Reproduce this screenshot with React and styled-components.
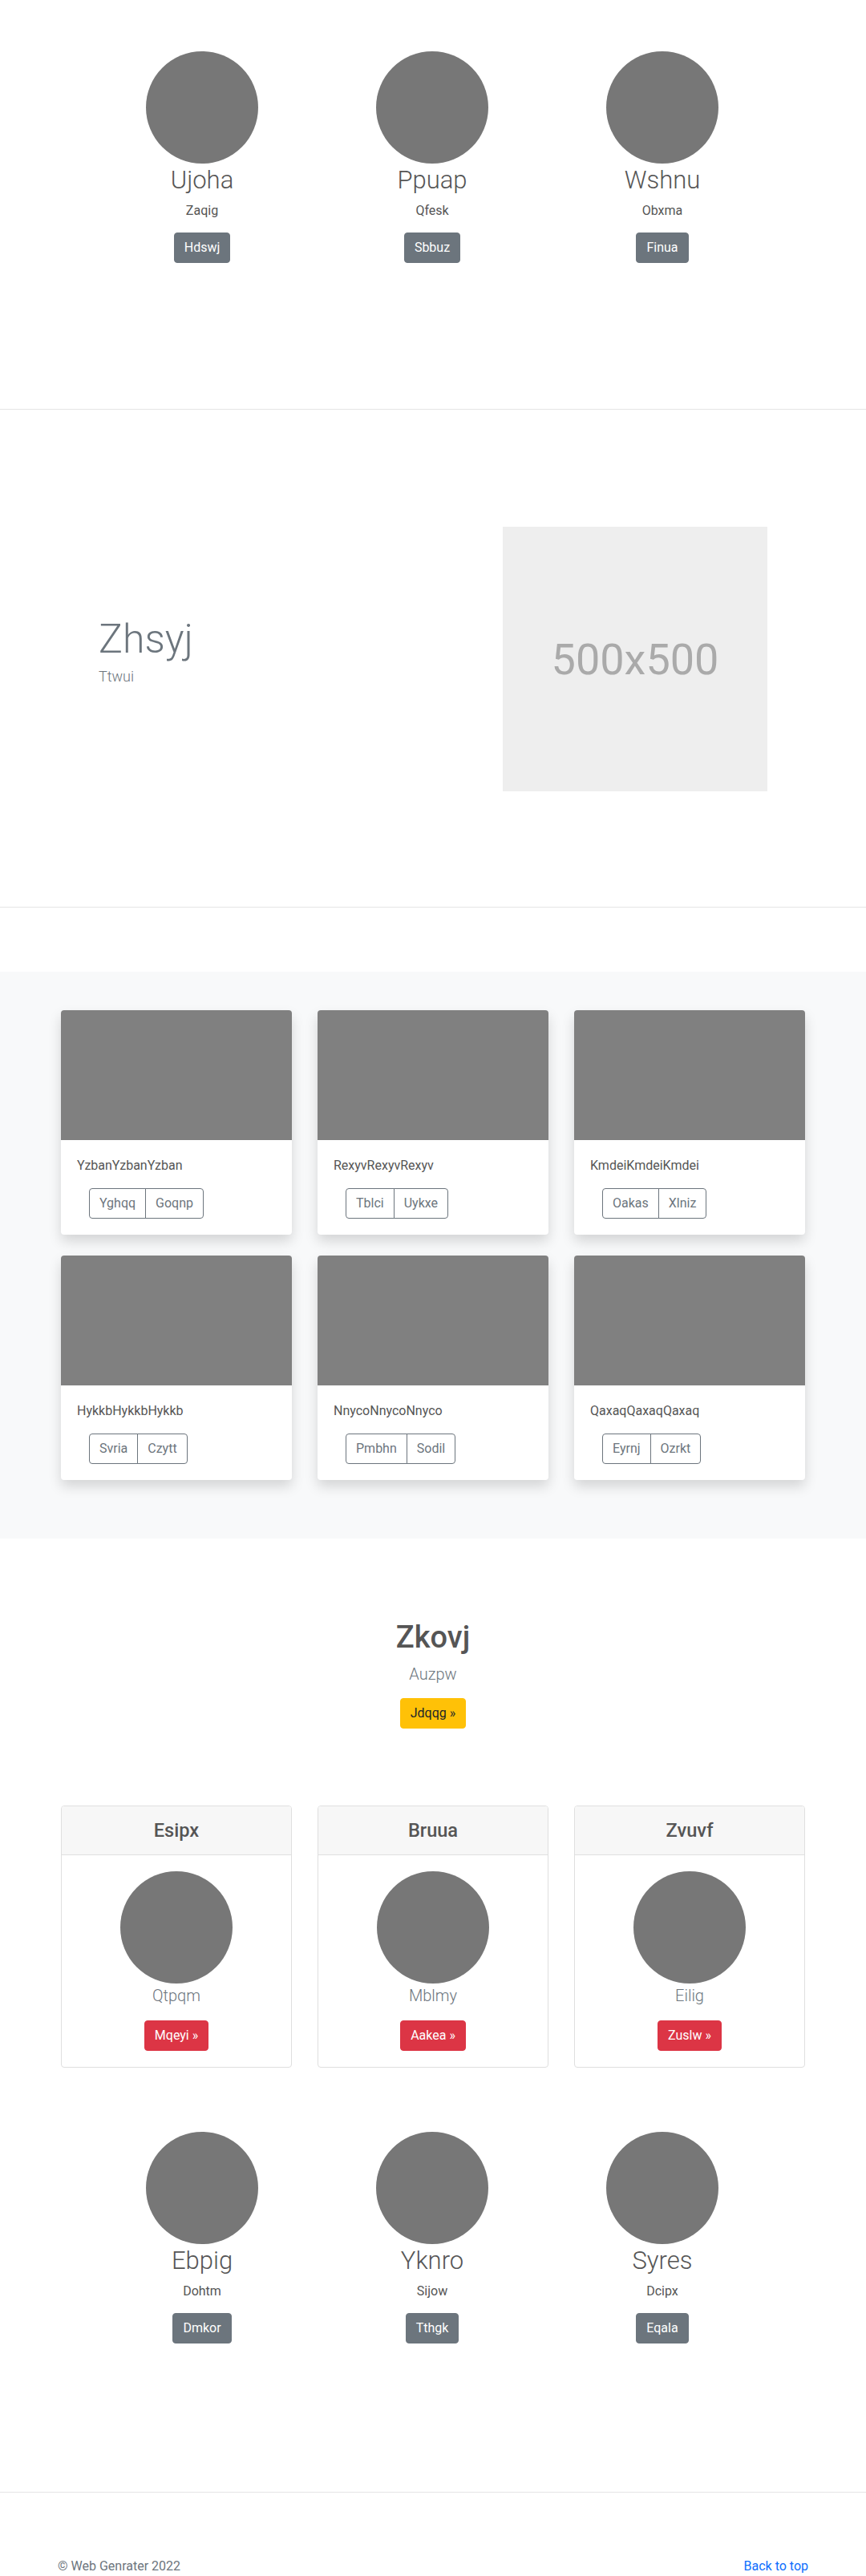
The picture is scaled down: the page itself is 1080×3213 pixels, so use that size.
import React from "react";
import styled, { createGlobalStyle } from "styled-components";

const GlobalStyle = createGlobalStyle`
  html, body { margin: 0; padding: 0; }
  body {
    font-family: Roboto, "Noto Sans", "Liberation Sans", Arial, sans-serif;
    font-size: 16px;
    line-height: 1.5;
    color: #555;
    background: #fff;
  }
  * { box-sizing: border-box; }
`;

const Page = styled.div`
  width: 1080px;
`;

/* ---------- team rows ---------- */
const TeamSection = styled.section`
  padding: ${(p) => (p.$top ? "64px 0 182px" : "0 0 185px")};
`;

const TeamGrid = styled.div`
  display: grid;
  grid-template-columns: repeat(3, 287px);
  justify-content: center;
  padding-right: 2px;
`;

const Member = styled.div`
  display: flex;
  flex-direction: column;
  align-items: center;
  text-align: center;
`;

const Avatar = styled.div`
  width: 140px;
  height: 140px;
  border-radius: 50%;
  background: #777;
  flex: none;
`;

const MemberName = styled.h2`
  margin: 2px 0 8px;
  font-size: 31px;
  line-height: 37px;
  font-weight: 300;
  color: #555;
`;

const MemberRole = styled.p`
  margin: 0 0 15px;
  font-size: 16px;
  line-height: 24px;
  color: #555;
`;

const SolidButton = styled.a`
  display: inline-block;
  padding: 6px 12px;
  border: 1px solid ${(p) => p.$bg};
  border-radius: 4px;
  background: ${(p) => p.$bg};
  color: ${(p) => p.$fg};
  font-size: 16px;
  line-height: 24px;
  text-decoration: none;
  cursor: pointer;
`;

const Divider = styled.hr`
  margin: 0;
  border: 0;
  height: 1px;
  background: #e5e5e5;
`;

/* ---------- featurette ---------- */
const Featurette = styled.section`
  display: grid;
  grid-template-columns: 504px 330px;
  align-items: center;
  padding: 146px 0 144px 123px;
`;

const FeatureText = styled.div`
  padding-bottom: 21px;
`;

const FeatureTitle = styled.h2`
  margin: 0 0 3px;
  font-size: 50px;
  line-height: 60px;
  font-weight: 300;
  color: #6c757d;
`;

const FeatureLead = styled.p`
  margin: 0;
  font-size: 18px;
  line-height: 27px;
  font-weight: 300;
  color: #6c757d;
`;

const Placeholder = styled.div`
  width: 330px;
  height: 330px;
  background: #eee;
  color: #aaa;
  display: flex;
  align-items: center;
  justify-content: center;
  font-size: 54px;
  line-height: 1;
  padding-top: 2px;
`;

/* ---------- album ---------- */
const Album = styled.section`
  margin-top: 80px;
  background: #f8f9fa;
  padding: 48px 0 73px;
`;

const CardGrid = styled.div`
  display: grid;
  grid-template-columns: repeat(3, 288px);
  column-gap: 32px;
  row-gap: 26px;
  justify-content: center;
`;

const AlbumCard = styled.div`
  background: #fff;
  border-radius: 4px;
  box-shadow: 0 8px 16px rgba(0, 0, 0, 0.15);
  overflow: hidden;
`;

const Thumb = styled.div`
  height: 162px;
  background: #808080;
`;

const CardBody = styled.div`
  padding: 20px;
`;

const CardText = styled.p`
  margin: 0 0 16px;
  font-size: 16px;
  line-height: 24px;
  color: #555;
`;

const ButtonGroup = styled.div`
  display: inline-flex;
  margin-left: 15px;
`;

const OutlineButton = styled.a`
  display: inline-block;
  padding: 6px 12px;
  border: 1px solid #6c757d;
  color: #6c757d;
  font-size: 16px;
  line-height: 24px;
  text-decoration: none;
  &:first-child { border-radius: 4px 0 0 4px; }
  &:last-child { border-radius: 0 4px 4px 0; }
  & + & { margin-left: -1px; }
`;

/* ---------- pricing ---------- */
const PricingHeader = styled.section`
  padding-top: 100px;
  margin-bottom: 96px;
  text-align: center;
`;

const PricingTitle = styled.h1`
  margin: 0 0 8px;
  font-size: 38px;
  line-height: 46px;
  font-weight: 500;
  color: #555;
`;

const PricingLead = styled.p`
  margin: 0 0 15px;
  font-size: 20px;
  line-height: 30px;
  font-weight: 300;
  color: #6c757d;
`;

const PricingGrid = styled(CardGrid)`
  margin-bottom: 80px;
`;

const PriceCard = styled.div`
  border: 1px solid #dfdfdf;
  border-radius: 4px;
  background: #fff;
  overflow: hidden;
`;

const PriceHeader = styled.div`
  padding: 16px;
  background: #f7f7f7;
  border-bottom: 1px solid #dfdfdf;
  text-align: center;
`;

const PriceTitle = styled.h4`
  margin: 0;
  font-size: 23.6px;
  line-height: 28px;
  font-weight: 500;
  color: #555;
`;

const PriceBody = styled.div`
  padding: 20px;
  display: flex;
  flex-direction: column;
  align-items: center;
  text-align: center;
`;

const PriceLead = styled.p`
  margin: 0 0 16px;
  font-size: 20px;
  line-height: 30px;
  font-weight: 300;
  color: #6c757d;
`;

/* ---------- footer ---------- */
const Footer = styled.footer`
  border-top: 1px solid #e5e5e5;
  padding-top: 80px;
`;

const FooterInner = styled.div`
  width: 960px;
  margin: 0 auto;
  padding: 0 12px;
  display: flex;
  justify-content: space-between;
  font-size: 16px;
  line-height: 24px;
`;

const FooterText = styled.p`
  margin: 0;
  color: #6c757d;
`;

const FooterLink = styled.a`
  color: #0d6efd;
  text-decoration: none;
`;

const topTeam = [
  { name: "Ujoha", role: "Zaqig", btn: "Hdswj" },
  { name: "Ppuap", role: "Qfesk", btn: "Sbbuz" },
  { name: "Wshnu", role: "Obxma", btn: "Finua" },
];

const bottomTeam = [
  { name: "Ebpig", role: "Dohtm", btn: "Dmkor" },
  { name: "Yknro", role: "Sijow", btn: "Tthgk" },
  { name: "Syres", role: "Dcipx", btn: "Eqala" },
];

const albums = [
  { text: "YzbanYzbanYzban", a: "Yghqq", b: "Goqnp" },
  { text: "RexyvRexyvRexyv", a: "Tblci", b: "Uykxe" },
  { text: "KmdeiKmdeiKmdei", a: "Oakas", b: "Xlniz" },
  { text: "HykkbHykkbHykkb", a: "Svria", b: "Czytt" },
  { text: "NnycoNnycoNnyco", a: "Pmbhn", b: "Sodil" },
  { text: "QaxaqQaxaqQaxaq", a: "Eyrnj", b: "Ozrkt" },
];

const plans = [
  { title: "Esipx", lead: "Qtpqm", btn: "Mqeyi »" },
  { title: "Bruua", lead: "Mblmy", btn: "Aakea »" },
  { title: "Zvuvf", lead: "Eilig", btn: "Zuslw »" },
];

function Team({ people, top }) {
  return (
    <TeamSection $top={top}>
      <TeamGrid>
        {people.map((p) => (
          <Member key={p.name}>
            <Avatar />
            <MemberName>{p.name}</MemberName>
            <MemberRole>{p.role}</MemberRole>
            <SolidButton $bg="#6c757d" $fg="#fff">{p.btn}</SolidButton>
          </Member>
        ))}
      </TeamGrid>
    </TeamSection>
  );
}

export default function App() {
  return (
    <Page>
      <GlobalStyle />
      <Team people={topTeam} top />
      <Divider />
      <Featurette>
        <FeatureText>
          <FeatureTitle>Zhsyj</FeatureTitle>
          <FeatureLead>Ttwui</FeatureLead>
        </FeatureText>
        <Placeholder>500x500</Placeholder>
      </Featurette>
      <Divider />
      <Album>
        <CardGrid>
          {albums.map((c) => (
            <AlbumCard key={c.text}>
              <Thumb />
              <CardBody>
                <CardText>{c.text}</CardText>
                <ButtonGroup>
                  <OutlineButton>{c.a}</OutlineButton>
                  <OutlineButton>{c.b}</OutlineButton>
                </ButtonGroup>
              </CardBody>
            </AlbumCard>
          ))}
        </CardGrid>
      </Album>
      <PricingHeader>
        <PricingTitle>Zkovj</PricingTitle>
        <PricingLead>Auzpw</PricingLead>
        <SolidButton $bg="#ffc107" $fg="#212529">Jdqqg »</SolidButton>
      </PricingHeader>
      <PricingGrid>
        {plans.map((p) => (
          <PriceCard key={p.title}>
            <PriceHeader>
              <PriceTitle>{p.title}</PriceTitle>
            </PriceHeader>
            <PriceBody>
              <Avatar />
              <PriceLead>{p.lead}</PriceLead>
              <SolidButton $bg="#dc3545" $fg="#fff">{p.btn}</SolidButton>
            </PriceBody>
          </PriceCard>
        ))}
      </PricingGrid>
      <Team people={bottomTeam} />
      <Footer>
        <FooterInner>
          <FooterText>© Web Genrater 2022</FooterText>
          <FooterLink href="#">Back to top</FooterLink>
        </FooterInner>
      </Footer>
    </Page>
  );
}
